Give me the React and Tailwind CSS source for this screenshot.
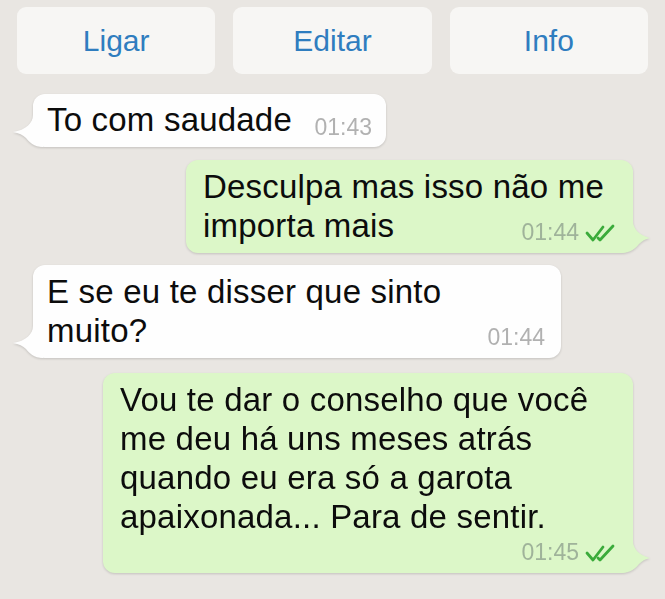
import React from 'react';

const Checks = () => (
  <svg width="32" height="18" viewBox="0 0 32 18" className="ml-[6px] shrink-0">
    <path d="M2 9 L8 16 L18 3" fill="none" stroke="#3bab3b" strokeWidth="2.8" strokeLinecap="round" strokeLinejoin="round" />
    <path d="M13 14 L15 16 L28 2" fill="none" stroke="#3bab3b" strokeWidth="2.8" strokeLinecap="round" strokeLinejoin="round" />
  </svg>
);

// tail for incoming (white) bubbles, bottom-left
const TailLeft = () => (
  <svg width="30" height="32" viewBox="0 0 30 32" className="absolute left-[-20px] bottom-0">
    <path d="M20 0 C20 8 13 15 0 17 C6 18 10 20 13 23 C16 27 21 32 30 32 L30 0 Z" fill="#fefefe" />
  </svg>
);

// tail for outgoing (green) bubbles, bottom-right
const TailRight = () => (
  <svg width="30" height="32" viewBox="0 0 30 32" className="absolute right-[-17px] bottom-0">
    <path d="M13 0 C13 8 19 14 30 17 C25 18 22 20 19 23 C16 27 11 32 0 32 L0 0 Z" fill="#dcf7c8" />
  </svg>
);

const Bubble = ({ out, className, children }) => (
  <div className={`relative drop-shadow-[0_1px_1px_rgba(0,0,0,0.16)] ${out ? 'self-end' : 'self-start'} ${className}`}>
    {out ? <TailRight /> : <TailLeft />}
    <div
      className={`relative h-full rounded-[12px] text-[33px] leading-[39px] tracking-[0.2px] text-[#0c0c0c] ${
        out ? 'bg-[#dcf7c8] pl-[17px] pr-[16px]' : 'bg-[#fefefe] pl-[14px] pr-[14px]'
      }`}
    >
      {children}
    </div>
  </div>
);

const Time = ({ out, children }) => (
  <span className={`text-[23px] tracking-normal ${out ? 'text-[#9fb39a]' : 'text-[#b1b1b1]'}`}>{children}</span>
);

export default function App() {
  return (
    <div className="w-[665px] h-[599px] overflow-hidden bg-[#e9e6e2] font-['Liberation_Sans',Arial,sans-serif]">
      <div className="flex gap-[18px] px-[17px] pt-[7px]">
        {['Ligar', 'Editar', 'Info'].map((label) => (
          <div
            key={label}
            className="flex-1 h-[67px] rounded-[9px] bg-[#f7f6f4] flex items-center justify-center text-[30px] text-[#2f7dbf]"
          >
            {label}
          </div>
        ))}
      </div>

      <div className="flex flex-col mt-[20px]">
        <Bubble className="ml-[33px] w-[353px] h-[53px]">
          <div className="flex items-baseline justify-between pt-[6px] whitespace-nowrap">
            <span>To com saudade</span>
            <span className="translate-y-[4px]">
              <Time>01:43</Time>
            </span>
          </div>
        </Bubble>

        <Bubble out className="mt-[13px] mr-[32px] w-[447px] h-[93px]">
          <div className="pt-[7px] whitespace-nowrap">
            <div>Desculpa mas isso não me</div>
            <div className="flex items-baseline justify-between">
              <span>importa mais</span>
              <span className="flex items-center translate-y-[3px]">
                <Time out>01:44</Time>
                <Checks />
              </span>
            </div>
          </div>
        </Bubble>

        <Bubble className="mt-[12px] ml-[33px] w-[528px] h-[93px]">
          <div className="pt-[7px] pr-[2px] whitespace-nowrap">
            <div>E se eu te disser que sinto</div>
            <div className="flex items-baseline justify-between">
              <span>muito?</span>
              <span className="translate-y-[3px]">
                <Time>01:44</Time>
              </span>
            </div>
          </div>
        </Bubble>

        <Bubble out className="mt-[15px] mr-[32px] w-[530px] h-[200px]">
          <div className="pt-[7px] whitespace-nowrap">
            <div>Vou te dar o conselho que você</div>
            <div>me deu há uns meses atrás</div>
            <div>quando eu era só a garota</div>
            <div>apaixonada... Para de sentir.</div>
            <div className="flex justify-end items-center mt-[-3px]">
              <Time out>01:45</Time>
              <Checks />
            </div>
          </div>
        </Bubble>
      </div>
    </div>
  );
}
